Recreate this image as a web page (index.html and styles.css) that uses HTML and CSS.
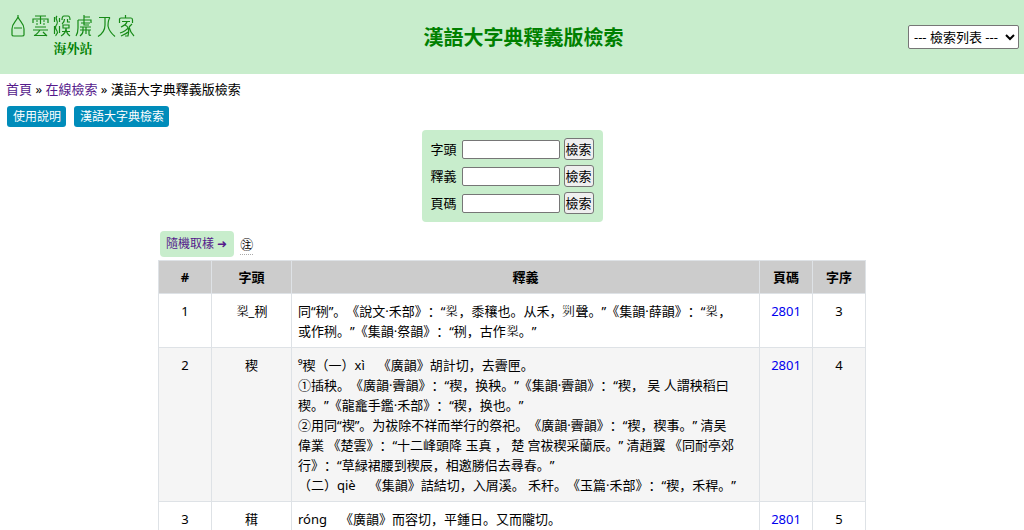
FILE: index.html
```
<!DOCTYPE html>
<html lang="zh">
<head>
<meta charset="utf-8">
<title>漢語大字典釋義版檢索</title>
<link rel="stylesheet" href="styles.css">
</head>
<body>
<header class="top">
  <a class="logo" href="#" aria-label="白雲深處人家 海外站">
    <svg class="seal" viewBox="0 0 124 24" aria-hidden="true">
      <path d="M7 1V4M7 3C5 8 1 9 1 15V21Q1 22 3 22H11Q13 22 13 21V15C13 9 9 8 7 3M3 14H11"/>
      <path d="M24 2H35M29.500 2V10M22 9V5H37V9M25 7H27M32 7H34M25 10H27M32 10H34M24 13H35M22 16H37M29 16C27 19 25 21 23 21.500H35M32 18L36 22"/>
      <path d="M46 2C43 5 48 7 46 10S44 14 46 17S44 20 45 22M43.500 3V8M43.500 12V20M48.500 4V8M48.500 12V19M51 6Q51 2 53 2H57Q59 2 59 6M53.500 5C53.500 8 52 9 51 10M56.500 5V8H59M52 11H58V14H52ZM50 22C54 20 55 17 55 14C55 18 56 20 59 22M51 17.500H59"/>
      <path d="M73 1V6M73 3H79M67 6H80V9M67 6V14Q67 19 65 22M70 9H79M73 6V11H78M69 13H80M69 16H80M72 13V17Q72 20 69 22M75 13V20M78 16V20Q78 22 80 21"/>
      <path d="M88 3.500H99M94 3.500V11C94 16 91 20 87 22.500M99 3.500C97 6 97 9 97 12C98 17 101 20 104 22.500"/>
      <path d="M114.500 1V4M108.500 9V5Q108.500 4 110 4H120Q121.500 4 121.500 6V9M111 7.500H119M116 8C115 11 112 12 110 13M114 11C119 13 118 18 117 22H114M117 14C115 17 112 18 109 19M117 18C115 20 112 21 110 22M121 10L118 13M118 13C119 17 121 20 123 22"/>
    </svg>
    <span class="site">海外站</span>
  </a>
  <h1 class="title">漢語大字典釋義版檢索</h1>
  <select class="picker" aria-label="檢索列表"><option>--- 檢索列表 ---</option></select>
</header>
<nav class="crumbs"><a href="#">首頁</a> » <a href="#">在線檢索</a> » 漢語大字典釋義版檢索</nav>
<div class="actions">
  <button class="action" type="button">使用說明</button>
  <button class="action" type="button">漢語大字典檢索</button>
</div>
<main class="content">
  <form class="search">
    <div class="field"><label for="head">字頭</label><input id="head" type="text"><button type="button">檢索</button></div>
    <div class="field"><label for="sense">釋義</label><input id="sense" type="text"><button type="button">檢索</button></div>
    <div class="field"><label for="page">頁碼</label><input id="page" type="text"><button type="button">檢索</button></div>
  </form>
  <section class="results">
    <div class="sample"><a class="random" href="#">隨機取樣 ➜</a><abbr class="note" title="注">㊟</abbr></div>
    <table class="entries">
      <colgroup><col class="c-num"><col class="c-head"><col><col class="c-page"><col class="c-order"></colgroup>
      <thead><tr><th>#</th><th>字頭</th><th>釋義</th><th>頁碼</th><th>字序</th></tr></thead>
      <tbody>
        <tr><td>1</td><td>𥞥_䅀</td><td class="text">同“䅀”。《說文·禾部》：“𥞥，黍穰也。从禾，𠛱聲。”《集韻·薛韻》：“𥞥，<br>或作䅀。”《集韻·祭韻》：“䅀，古作𥞥。”</td><td><a href="#">2801</a></td><td>3</td></tr>
        <tr><td>2</td><td>稧</td><td class="text">⁹稧（一）xì　《廣韻》胡計切，去霽匣。<br>①插秧。《廣韻·霽韻》：“稧，换秧。”《集韻·霽韻》：“稧， 吴 人謂秧稻曰<br>稧。”《龍龕手鑑·禾部》：“稧，换也。”<br>②用同“禊”。为祓除不祥而举行的祭祀。《廣韻·霽韻》：“稧，稧事。” 清吴<br>偉業 《楚雲》：“十二峰頭降 玉真 ， 楚 宫祓稧采蘭辰。” 清趙翼 《同耐亭郊<br>行》：“草緑裙腰到稧辰，相邀勝侣去尋春。”<br>（二）qiè　《集韻》詰結切，入屑溪。 禾秆。《玉篇·禾部》：“稧，禾稈。”</td><td><a href="#">2801</a></td><td>4</td></tr>
        <tr><td>3</td><td>穁</td><td class="text">róng　《廣韻》而容切，平鍾日。又而隴切。</td><td><a href="#">2801</a></td><td>5</td></tr>
      </tbody>
    </table>
  </section>
</main>
</body>
</html>
```
FILE: styles.css
```
body {
  margin: 0;
  background: #fff;
  color: #000;
  font: 13px/20px "Noto Sans", "Noto Sans CJK SC", sans-serif;
  text-spacing-trim: space-all;
}
button, input, select { font: inherit; }
.top {
  display: flex;
  justify-content: space-between;
  align-items: center;
  min-height: 74px;
  padding: 0 5px;
  box-sizing: border-box;
  background: #c8edcc;
}
.logo {
  display: flex;
  flex-direction: column;
  align-items: center;
  width: 124px;
  margin: 0 4px 2px 6px;
  color: #008000;
  text-decoration: none;
}
.seal { width: 124px; height: 24px; fill: none; stroke: #178a17; stroke-width: 1.2; }
.site { font: bold 13px/20px "Noto Serif CJK TC", "Noto Sans CJK TC", serif; }
.title { margin: 0; padding-top: 2px; color: #008000; font-size: 20px; line-height: 28px; }
.picker {
  width: 111px;
  height: 24px;
  padding: 0 1px;
  border: 1px solid #767676;
  border-radius: 2px;
  background-color: #fff;
  color: #000;
}
.crumbs { padding: 5px 6px; }
.crumbs a, .random { color: #551a8b; text-decoration: none; }
.actions { display: flex; gap: 8px; padding: 2px 7px; }
.action {
  padding: 1px 5px 0 6px;
  border: 0;
  border-radius: 3px;
  background: #008cba;
  color: #fff;
  font-size: 12px;
  line-height: 20px;
}
.content { padding: 0 8px; }
.search {
  display: flex;
  flex-direction: column;
  gap: 5px;
  width: max-content;
  box-sizing: border-box;
  margin: 1px auto 0;
  padding: 8px 9px;
  border-radius: 4px;
  background: #c8edcc;
}
.field { display: flex; align-items: center; gap: 4px; }
.field label { width: 27px; }
.field input {
  width: 98px;
  height: 19px;
  box-sizing: border-box;
  padding: 1px 2px;
  border: 1px solid #767676;
  border-radius: 2px;
}
.field button {
  width: 30px;
  padding: 0;
  border: 1px solid #767676;
  border-radius: 3px;
  background: #efefef;
  line-height: 20px;
}
.results { max-width: 708px; margin: 9px auto 0; }
.sample { display: flex; align-items: center; gap: 6px; margin: 0 2px 3px; }
.random {
  padding: 3px 7px 3px 6px;
  border-radius: 4px;
  background: #c8edcc;
  font-size: 12px;
}
.note { border-bottom: 1px dotted #aaa; text-decoration: none; }
.entries { width: 100%; border-collapse: collapse; table-layout: fixed; }
.c-num, .c-page, .c-order { width: 53px; }
.c-head { width: 80px; }
.entries th { padding: 6px; border: 1px solid #dee2e6; background: #ccc; }
.entries td { padding: 7px 6px 6px; border: 1px solid #dee2e6; text-align: center; vertical-align: top; }
.entries tbody tr:nth-child(even) { background: #f5f5f5; }
.entries .text { text-align: left; white-space: nowrap; }
.entries a { color: #00e; text-decoration: none; }
```
